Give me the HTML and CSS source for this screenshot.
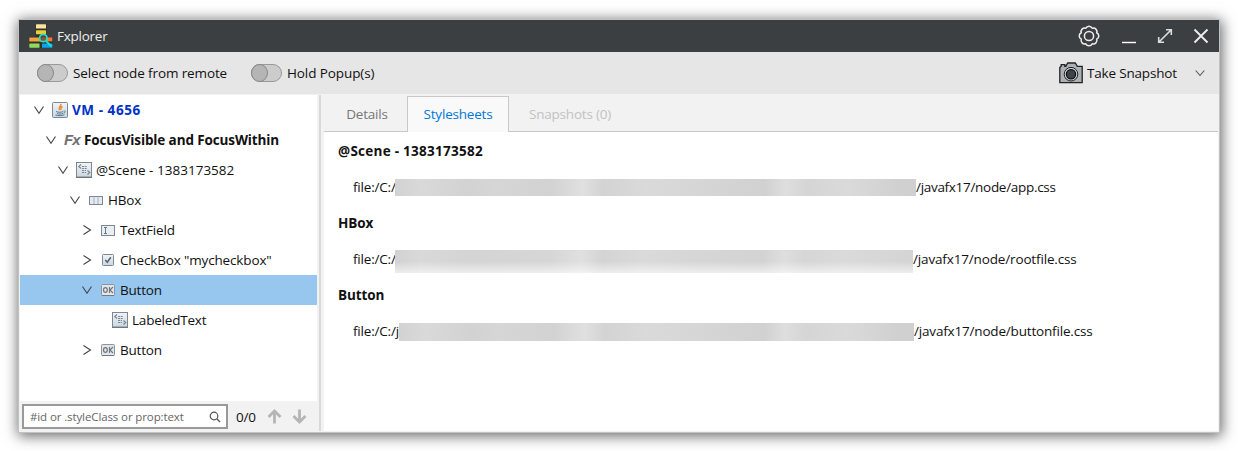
FILE: index.html
```html
<!DOCTYPE html>
<html lang="en">
<head>
<meta charset="utf-8">
<title>Fxplorer</title>
<link rel="stylesheet" href="styles.css">
</head>
<body>
<svg class="defs" width="0" height="0">
  <defs>
    <linearGradient id="steel" x1="0" y1="0" x2="0" y2="1"><stop offset="0" stop-color="#f1f5f8"/><stop offset="1" stop-color="#cbd6df"/></linearGradient>
    <symbol id="down" viewBox="0 0 12 12"><path d="M1.500 2.500 6 9.300 10.500 2.500" fill="none" stroke="#444" stroke-width="1.100"/></symbol>
    <symbol id="right" viewBox="0 0 12 12"><path d="M2.500 1.500 9.500 6 2.500 10.500" fill="none" stroke="#444" stroke-width="1.100"/></symbol>
    <symbol id="node" viewBox="0 0 16 16"><rect x=".5" y=".5" width="15" height="14.500" fill="url(#steel)" stroke="#7c8790"/><path d="M0 15.500h16" stroke="#6d7780"/><path d="M5 2.500 2.800 4.500 5 6.500M11.500 8.500l2.200 2-2.200 2" fill="none" stroke="#78848f" stroke-width="1.200"/><path d="M6 4.500h5M6 6.500h5M6 8.500h4M6 10.500h4" stroke="#7b8792" stroke-dasharray="2 .7"/></symbol>
    <symbol id="ok" viewBox="0 0 14 12"><rect x=".5" y=".5" width="13" height="11" rx="1" fill="#e2e6e9" stroke="#8b949c"/><path d="M1 11.500h12" stroke="#727b83"/><ellipse cx="4.400" cy="6" rx="1.900" ry="2.400" fill="none" stroke="#70787f" stroke-width="1.200"/><path d="M8.500 3v6M12 3 9 6l3 3" fill="none" stroke="#70787f" stroke-width="1.200"/></symbol>
  </defs>
</svg>
<div class="window">
  <header class="titlebar">
    <svg class="logo" width="24" height="24" viewBox="0 0 24 24">
      <rect x="6.500" y="0" width="11" height="24" fill="#30302c"/><rect x="0" y="13" width="24" height="11" fill="#30302c"/>
      <rect x="7" y=".2" width="10" height="4.200" rx=".5" fill="#f8e69c"/><rect x="7" y="6.300" width="10" height="4" rx=".5" fill="#e7cf35"/>
      <rect x=".3" y="13.400" width="12" height="4" rx=".5" fill="#f5a43c"/><rect x="13" y="13.400" width="10.300" height="4" fill="#f47637"/>
      <rect x=".3" y="19.400" width="10.200" height="4.300" rx=".5" fill="#8edb5f"/><rect x="13" y="19.400" width="10.500" height="4.300" rx=".5" fill="#08a5ec"/>
      <circle cx="14.300" cy="14" r="3.700" fill="#6a4b3a" fill-opacity=".75" stroke="#20e0cb" stroke-width="1.700"/><path d="m17 17 5.500 5.500" stroke="#20e0cb" stroke-width="1.900"/>
    </svg>
    <span class="app-name">Fxplorer</span>
    <span class="spacer"></span>
    <svg class="gear" width="22" height="22" viewBox="0 0 22 22" fill="none" stroke="#eee" stroke-width="1.500" stroke-linejoin="round"><circle cx="11" cy="11" r="4.600"/><path d="M7.800 3.300A3.500 3.500 0 0 1 14.200 3.300 3.500 3.500 0 0 1 18.700 7.800 3.500 3.500 0 0 1 18.700 14.200 3.500 3.500 0 0 1 14.200 18.700 3.500 3.500 0 0 1 7.800 18.700 3.500 3.500 0 0 1 3.300 14.200 3.500 3.500 0 0 1 3.300 7.800 3.500 3.500 0 0 1 7.800 3.300z"/></svg>
    <svg class="minimize" width="14" height="16" viewBox="0 0 14 16"><path d="M0 14.500h14" stroke="#fff" stroke-width="1.400"/></svg>
    <svg class="resize" width="16" height="16" viewBox="0 0 16 16" fill="none" stroke="#ddd" stroke-width="1.600"><path d="m1.500 14.500 13-13M9 1.700h5.300V7M1.700 9v5.300H7"/></svg>
    <svg class="close" width="16" height="16" viewBox="0 0 16 16"><path d="m1.500 1.500 13 13m0-13-13 13" stroke="#eee" stroke-width="1.800"/></svg>
  </header>
  <div class="toolbar">
    <span class="toggle"><span class="knob"></span></span><span class="label select-label">Select node from remote</span>
    <span class="toggle"><span class="knob"></span></span><span class="label hold-label">Hold Popup(s)</span>
    <span class="spacer"></span>
    <svg class="camera" width="24" height="22" viewBox="0 0 24 22"><path d="M.8 20.700V5.300l1.400-1V2.600h3.600v1.700h1L8.700 1h7.600l2 3.300h4.900v16.400z" fill="#aab0b5" stroke="#222" stroke-width="1.300"/><circle cx="12" cy="12.200" r="6.800" fill="#c9cdd0" stroke="#222"/><circle cx="12" cy="12.200" r="4.600" fill="#3d454c" stroke="#111" stroke-width="1.300"/></svg>
    <span class="label snap-label">Take Snapshot</span>
    <svg class="menu-arrow" width="10" height="8" viewBox="0 0 10 8"><path d="m.7 1.500 4.300 5L9.300 1.500" fill="none" stroke="#555" stroke-width="1.100"/></svg>
  </div>
  <main class="content">
    <aside class="sidebar">
      <div class="tree">
        <div class="row level-0"><svg class="arrow"><use href="#down"/></svg><svg class="icon" width="16" height="16" viewBox="0 0 16 16"><rect x=".5" y=".5" width="15" height="15" rx="1" fill="url(#steel)" stroke="#75899a"/><path d="M8.500 2c2 1.500-3 3-1 6M10.500 4.500C7.500 6 10 6.500 8.500 8" fill="none" stroke="#ed8420" stroke-width="1.400"/><path d="M4 9.500c2 1 6 1 7 0M5 11.500c2 .8 4 .8 6 0M3.500 13c3 1 7 .7 9-.3M11.500 9c3-.5 2 2 0 2" fill="none" stroke="#587990"/></svg><span class="vm">VM - 4656</span></div>
        <div class="row level-1"><svg class="arrow"><use href="#down"/></svg><span class="fx">Fx</span><span class="app">FocusVisible and FocusWithin</span></div>
        <div class="row level-2"><svg class="arrow"><use href="#down"/></svg><svg class="icon" width="16" height="16"><use href="#node"/></svg><span class="scene">@Scene - 1383173582</span></div>
        <div class="row level-3"><svg class="arrow"><use href="#down"/></svg><svg class="icon small" width="14" height="9" viewBox="0 0 14 9"><rect x=".5" y=".5" width="13" height="8" fill="#e4eaef" stroke="#7c8893"/><path d="M5 1v7M9 1v7" stroke="#a9b4bd"/></svg><span class="hbox">HBox</span></div>
        <div class="row level-4"><svg class="arrow"><use href="#right"/></svg><svg class="icon small" width="14" height="11" viewBox="0 0 14 11"><rect x=".5" y=".5" width="13" height="10" fill="#e8eef2" stroke="#7c8893"/><path d="M3 2.500h3M3 8.500h3M4.500 2.500v6" stroke="#6d7983"/></svg><span class="textfield">TextField</span></div>
        <div class="row level-4"><svg class="arrow"><use href="#right"/></svg><svg class="icon small" width="14" height="12" viewBox="0 0 14 12"><rect x="1.500" y=".5" width="11" height="11" rx="1" fill="url(#steel)" stroke="#7c8893"/><path d="m4.300 6 2 2.300 3.500-5" fill="none" stroke="#56616c" stroke-width="1.500"/></svg><span class="checkbox">CheckBox "mycheckbox"</span></div>
        <div class="row level-4 selected"><svg class="arrow"><use href="#down"/></svg><svg class="icon small" width="14" height="12"><use href="#ok"/></svg><span class="button">Button</span></div>
        <div class="row level-5"><svg class="icon" width="16" height="16"><use href="#node"/></svg><span class="labeled">LabeledText</span></div>
        <div class="row level-4"><svg class="arrow"><use href="#right"/></svg><svg class="icon small" width="14" height="12"><use href="#ok"/></svg><span class="button">Button</span></div>
      </div>
      <div class="search-bar">
        <div class="search"><span class="prompt">#id or .styleClass or prop:text</span><svg width="12" height="12" viewBox="0 0 12 12"><circle cx="5" cy="5" r="3.800" fill="none" stroke="#555" stroke-width="1.200"/><path d="m7.800 7.800 3.200 3.200" stroke="#555" stroke-width="1.300"/></svg></div>
        <span class="count">0/0</span>
        <svg class="up" width="15" height="15" viewBox="0 0 15 15"><path d="M7.500 14.500V2.500M1.500 8l6-6 6 6" fill="none" stroke="#b5b5b5" stroke-width="2.800"/></svg>
        <svg class="next" width="15" height="15" viewBox="0 0 15 15"><path d="M7.500 .5v12M1.500 7l6 6 6-6" fill="none" stroke="#b5b5b5" stroke-width="2.800"/></svg>
      </div>
    </aside>
    <div class="divider"></div>
    <section class="details">
      <nav class="tabs"><span class="tab first"><span class="t-details">Details</span></span><span class="tab active"><span class="t-styles">Stylesheets</span></span><span class="tab disabled"><span class="t-snaps">Snapshots (0)</span></span><span class="tab-rest"></span></nav>
      <div class="sheets">
        <h2 class="scene-head">@Scene - 1383173582</h2>
        <p><span class="prefix">file:/C:/</span><span class="mask mask-a"></span><span class="path-a">/javafx17/node/app.css</span></p>
        <h2 class="hbox-head">HBox</h2>
        <p><span class="prefix">file:/C:/</span><span class="mask mask-b"></span><span class="path-b">/javafx17/node/rootfile.css</span></p>
        <h2 class="button-head">Button</h2>
        <p><span class="prefix last">file:/C:/j</span><span class="mask mask-c"></span><span class="path-c">/javafx17/node/buttonfile.css</span></p>
      </div>
    </section>
  </main>
</div>
</body>
</html>
```
FILE: styles.css
```css
* { box-sizing: border-box; }
body { margin: 0; padding: 20px 19px 19px; width: 1238px; height: 451px; overflow: hidden; background: #fff; color: #111; font: 13.5px/20px "Open Sans", "Noto Sans", sans-serif; letter-spacing: -.2px; }
svg { display: block; flex: none; }
.defs { position: absolute; }
.window { width: 1200px; height: 412px; display: flex; flex-direction: column; background: #f2f2f2; box-shadow: 0 0 0 1px #c2c2c2, 1px 2px 13px 2px rgba(0,0,0,.6); }
.titlebar { height: 32px; display: flex; align-items: center; padding: 0 10px; background: #3c3f41; color: #eee; }
.app-name { margin-left: 4px; letter-spacing: -.25px; }
.spacer { flex: 1; }
.minimize { margin-left: 22px; }
.resize { margin-left: 21px; }
.close { margin-left: 20px; }
.toolbar { height: 42px; display: flex; align-items: center; padding: 0 14px 0 18px; background: #e6e6e6; }
.toggle { width: 31px; height: 18px; border: 1px solid #999; border-radius: 9px; background: #ccc; }
.knob { display: block; width: 17px; height: 18px; margin: -1px; border: 1px solid #888; border-radius: 50%; background: #b5b5b5; }
.label { margin-left: 5px; white-space: nowrap; }
.select-label { width: 178px; letter-spacing: -.12px; }
.hold-label { letter-spacing: -.1px; }
.snap-label { width: 92px; margin-left: 4px; letter-spacing: -.18px; }
.menu-arrow { margin-left: 16px; }
.content { height: 338px; display: flex; }
.sidebar { width: 298px; padding: 1px 0 0 1px; }
.tree { height: 306px; background: #fff; }
.row { height: 30px; display: flex; align-items: center; white-space: nowrap; }
.row > span:last-child { margin-left: 4px; }
.arrow { width: 12px; height: 12px; }
.icon { margin-left: 7px; }
.icon.small { margin-left: 8px; }
.row .icon.small + span { margin-left: 5px; }
.level-0 { padding-left: 13px; }
.level-1 { padding-left: 25px; }
.level-2 { padding-left: 37px; }
.level-3 { padding-left: 49px; }
.level-4 { padding-left: 61px; }
.level-5 { padding-left: 85px; }
.selected { background: #97c7ef; }
.vm, .app { font-weight: 700; }
.vm { color: #0032c8; letter-spacing: .55px; }
.app { letter-spacing: -.12px; }
.scene { letter-spacing: .02px; }
.checkbox { letter-spacing: -.15px; }
.fx { width: 16px; margin-left: 7px; color: #6f6f6f; font: italic 700 15px/20px "Liberation Sans", Arial, sans-serif; letter-spacing: -1px; }
.search-bar { height: 31px; display: flex; align-items: center; padding-left: 2px; }
.search { width: 206px; height: 25px; display: flex; align-items: center; justify-content: space-between; padding: 0 5px 0 6px; border: 2px solid #999; background: #fff; color: #666; font-size: 11.5px; letter-spacing: -.11px; }
.count { width: 23px; margin-left: 8px; }
.up { margin-left: 8px; }
.next { margin-left: 10px; }
.divider { width: 7px; background: #f2f2f2; border-left: 2px solid #f2f2f2; }
.divider::before { content: ""; display: block; width: 2px; height: 336px; margin-top: 1px; background: #d9d9d9; }
.details { width: 894px; height: 337px; background: #fff; }
.tabs { height: 38px; display: flex; padding-top: 2px; background: #f2f2f2; }
.tab { display: flex; align-items: center; justify-content: center; border-bottom: 1px solid #c8c8c8; color: #777; white-space: nowrap; }
.first { width: 83px; padding-left: 3px; }
.active { width: 102px; padding-bottom: 2px; border: 1px solid #c8c8c8; border-bottom: 0; background: #f9f9f9; color: #0078d7; }
.disabled { width: 122px; color: #c2c2c2; }
.tab-rest { flex: 1; border-bottom: 1px solid #c8c8c8; }
.sheets { padding: 1px 0 0 14px; }
.sheets h2, .sheets p { height: 36px; margin: 0; font-size: 13.5px; line-height: 36px; white-space: nowrap; }
.sheets h2 { font-weight: 700; letter-spacing: -.1px; }
.sheets .scene-head { letter-spacing: .27px; }
.sheets p { display: flex; padding-left: 15px; }
.prefix { width: 42px; }
.prefix.last { width: 46px; }
.path-a { letter-spacing: -.3px; }
.path-b { letter-spacing: -.15px; }
.path-c { letter-spacing: -.18px; }
.mask { flex: none; background: linear-gradient(90deg, #d2d2d2, #d9d9d9 5%, #d2d2d2 14%, #d6d6d6 19%, #d2d2d2 30%, #e0e0e0 36%, #d3d3d3 40%, #dadada 48%, #d6d6d6 58%, #d1d1d1 71%, #dedede 75%, #d5d5d5 79%, #dadada 87%, #d0d0d0 97%, #d0d0d0); }
.mask-a { width: 521px; height: 17px; margin-top: 10px; }
.mask-b { width: 518px; height: 23px; margin-top: 9px; background: linear-gradient(transparent 50%, rgba(255,255,255,.6)), linear-gradient(90deg, #d2d2d2, #d9d9d9 5%, #d4d4d4 14%, #d6d6d6 30%, #e0e0e0 36%, #d4d4d4 40%, #dadada 48%, #d6d6d6 58%, #d3d3d3 71%, #dedede 75%, #d6d6d6 79%, #dadada 87%, #d4d4d4); }
.mask-c { width: 515px; height: 18px; margin-top: 10px; }
```
